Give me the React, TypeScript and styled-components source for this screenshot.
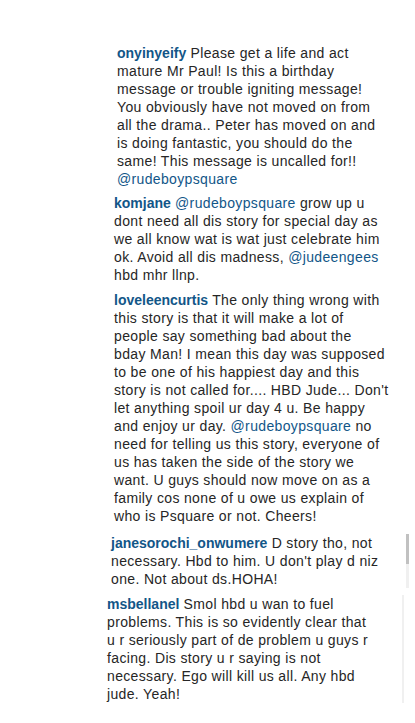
import { createGlobalStyle, styled } from "styled-components";

type Seg = string | { user: string } | { mention: string };
type CommentInfo = {
  indent: number;
  gap: number;
  pad?: [number, number];
  track?: "thumb" | "line";
  lines: Seg[][];
};

const comments: CommentInfo[] = [
  {
    indent: 117,
    gap: 0,
    lines: [
      [{ user: "onyinyeify" }, " Please get a life and act"],
      ["mature Mr Paul! Is this a birthday"],
      ["message or trouble igniting message!"],
      ["You obviously have not moved on from"],
      ["all the drama.. Peter has moved on and"],
      ["is doing fantastic, you should do the"],
      ["same! This message is uncalled for!!"],
      [{ mention: "@rudeboypsquare" }],
    ],
  },
  {
    indent: 114,
    gap: 6,
    lines: [
      [{ user: "komjane" }, " ", { mention: "@rudeboypsquare" }, " grow up u"],
      ["dont need all dis story for special day as"],
      ["we all know wat is wat just celebrate him"],
      ["ok. Avoid all dis madness, ", { mention: "@judeengees" }],
      ["hbd mhr llnp."],
    ],
  },
  {
    indent: 114,
    gap: 7,
    lines: [
      [{ user: "loveleencurtis" }, " The only thing wrong with"],
      ["this story is that it will make a lot of"],
      ["people say something bad about the"],
      ["bday Man! I mean this day was supposed"],
      ["to be one of his happiest day and this"],
      ["story is not called for.... HBD Jude... Don't"],
      ["let anything spoil ur day 4 u. Be happy"],
      ["and enjoy ur day. ", { mention: "@rudeboypsquare" }, " no"],
      ["need for telling us this story, everyone of"],
      ["us has taken the side of the story we"],
      ["want. U guys should now move on as a"],
      ["family cos none of u owe us explain of"],
      ["who is Psquare or not. Cheers!"],
    ],
  },
  {
    indent: 111,
    gap: 4,
    pad: [5, 0],
    track: "thumb",
    lines: [
      [{ user: "janesorochi_onwumere" }, " D story tho, not"],
      ["necessary. Hbd to him. U don't play d niz"],
      ["one. Not about ds.HOHA!"],
    ],
  },
  {
    indent: 107,
    gap: 3,
    pad: [4, 10],
    track: "line",
    lines: [
      [{ user: "msbellanel" }, " Smol hbd u wan to fuel"],
      ["problems. This is so evidently clear that"],
      ["u r seriously part of de problem u guys r"],
      ["facing. Dis story u r saying is not"],
      ["necessary. Ego will kill us all. Any hbd"],
      ["jude. Yeah!"],
    ],
  },
];

function renderSeg(seg: Seg, i: number) {
  if (typeof seg === "string") return <span key={i}>{seg}</span>;
  if ("user" in seg) return <UserName key={i}>{seg.user}</UserName>;
  return <Mention key={i}>{seg.mention}</Mention>;
}

function App() {
  return (
    <Page>
      <GlobalStyle />
      {comments.map((c, idx) => (
        <CommentBox key={idx} $gap={c.gap} $padTop={c.pad?.[0] ?? 0} $padBottom={c.pad?.[1] ?? 0}>
          <CommentText $indent={c.indent}>
            {c.lines.map((line, li) => (
              <Line key={li}>{line.map(renderSeg)}</Line>
            ))}
          </CommentText>
          {c.track === "thumb" && (
            <ScrollTrack $right={6} $width={3}>
              <ScrollThumb />
            </ScrollTrack>
          )}
          {c.track === "line" && <ScrollTrack $right={11} $width={2} />}
        </CommentBox>
      ))}
    </Page>
  );
}

export default App;

const GlobalStyle = createGlobalStyle`
  html, body {
    margin: 0;
    padding: 0;
    background: #ffffff;
  }
`;

const Page = styled.div`
  width: 415px;
  padding-top: 44px;
  font-family: "Liberation Sans", Arial, sans-serif;
  font-size: 14px;
  letter-spacing: 0.35px;
  line-height: 18px;
  color: #262626;
`;

const CommentBox = styled.div<{ $gap: number; $padTop: number; $padBottom: number }>`
  display: flex;
  margin-top: ${(p) => p.$gap}px;
  padding-top: ${(p) => p.$padTop}px;
  padding-bottom: ${(p) => p.$padBottom}px;
`;

const CommentText = styled.div<{ $indent: number }>`
  margin-left: ${(p) => p.$indent}px;
`;

const Line = styled.div`
  white-space: nowrap;
`;

const UserName = styled.span`
  font-weight: 700;
  letter-spacing: 0;
  color: #125688;
`;

const Mention = styled.span`
  color: #125688;
`;

const ScrollTrack = styled.div<{ $right: number; $width: number }>`
  margin-left: auto;
  margin-right: ${(p) => p.$right}px;
  width: ${(p) => p.$width}px;
  background: #f0f0f0;
  flex-shrink: 0;
`;

const ScrollThumb = styled.div`
  height: 30px;
  background: #c1c1c1;
`;
